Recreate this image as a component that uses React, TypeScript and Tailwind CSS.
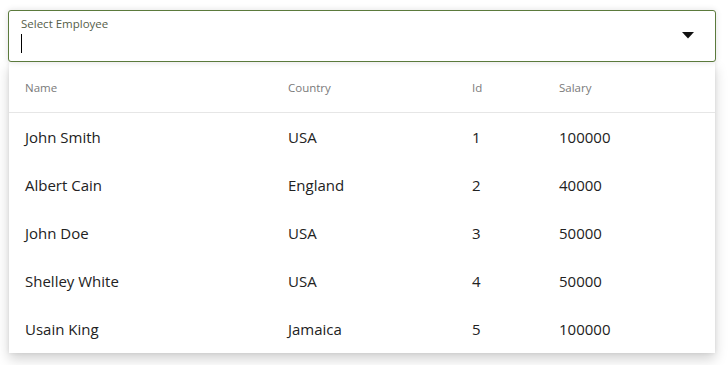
interface IEmployee {
    name: string,
    country: string,
    id: number,
    salary: number
}

const employees: IEmployee[] = [
    { name: 'John Smith', country: 'USA', id: 1, salary: 100000 },
    { name: 'Albert Cain', country: 'England', id: 2, salary: 40000 },
    { name: 'John Doe', country: 'USA', id: 3, salary: 50000 },
    { name: 'Shelley White', country: 'USA', id: 4, salary: 50000 },
    { name: 'Usain King', country: 'Jamaica', id: 5, salary: 100000 },
]

export default function App() {
    return (
        <div className="w-[728px] h-[365px] bg-white pt-[10px] px-2 font-['Open_Sans',sans-serif]">
            {/* Select input */}
            <div className="relative z-10 h-[52px] w-[708px] rounded-[3px] border border-[#5b7a3c] bg-white shadow-[0_0_6px_rgba(0,0,0,0.12)] pl-3 pt-[5px]">
                <div className="text-[11.5px] leading-[16px] text-[#55604a]">Select Employee</div>
                <div className="mt-[2px] h-[19px] w-px bg-black" />
                <svg className="absolute right-[21px] top-[21px]" width="12" height="7" viewBox="0 0 12 7">
                    <path d="M0 0 L12 0 L6 6.5 Z" fill="#111" />
                </svg>
            </div>

            {/* Dropdown panel */}
            <div className="mx-px w-[706px] bg-white shadow-[0_6px_12px_rgba(0,0,0,0.18),0_0_4px_rgba(0,0,0,0.08)]">
                <div className="flex h-[51px] items-center pt-[1px] border-b border-[#e6e6e6] text-[11.5px] text-[#7a7a7a]">
                    <span className="w-[279px] pl-4">Name</span>
                    <span className="w-[184px]">Country</span>
                    <span className="w-[87px]">Id</span>
                    <span>Salary</span>
                </div>
                {employees.map((emp) => (
                    <div key={emp.id} className="flex h-[48px] items-center text-[15px] text-[#222]">
                        <span className="w-[279px] pl-4">{emp.name}</span>
                        <span className="w-[184px]">{emp.country}</span>
                        <span className="w-[87px]">{emp.id}</span>
                        <span>{emp.salary}</span>
                    </div>
                ))}
            </div>
        </div>
    )
}
